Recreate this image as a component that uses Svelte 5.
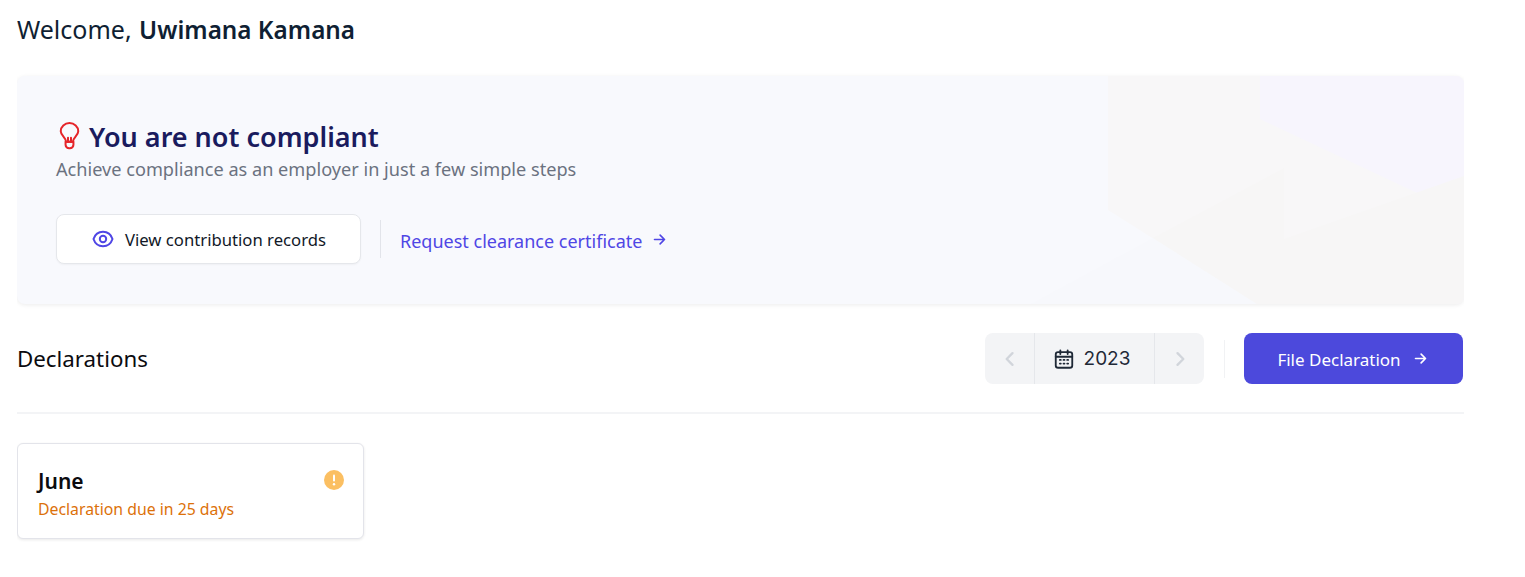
<script>
  let months = [{ name: 'June', note: 'Declaration due in 25 days' }];
</script>

<div class="page">
  <h1 class="welcome">Welcome, <strong>Uwimana Kamana</strong></h1>

  <section class="banner">
    <svg class="decor" viewBox="0 0 1447 228" preserveAspectRatio="none" aria-hidden="true">
      <polygon points="1091,0 1447,0 1447,228 1240,228 1091,134" fill="#f8f7f8" />
      <polygon points="1243,0 1447,0 1447,139 1243,43" fill="#f7f5fd" />
      <polygon points="1014,228 1136,162 1240,228" fill="#f7f8fc" />
      <polygon points="1136,162 1267,92 1267,163 1447,100 1447,228 1240,228" fill="#f7f6f6" />
    </svg>
    <div class="banner-body">
      <div class="title-row">
        <svg class="bulb" viewBox="0 0 24 32" fill="none" stroke="#e5252a" stroke-width="2.300" stroke-linecap="round" stroke-linejoin="round">
          <path d="M8 22.500C8 18 2 15.500 2 10.500a10 9.300 0 0 1 20 0c0 5-6 7.500-6 12z" />
          <path d="M10.300 18v4.500M13.700 18v4.500" />
          <path d="M7.500 22.500h9v3.500a4 4 0 0 1-4 4h-1a4 4 0 0 1-4-4z" />
        </svg>
        <h2>You are not compliant</h2>
      </div>
      <p class="sub">Achieve compliance as an employer in just a few simple steps</p>
      <div class="actions">
        <button class="view">
          <svg width="24" height="24" viewBox="0 0 24 24" fill="none" stroke="#4f46e5" stroke-width="2" stroke-linecap="round" stroke-linejoin="round">
            <circle cx="12" cy="12" r="3.200" />
            <path d="M2.500 12C4 7.500 7.700 4.800 12 4.800s8 2.700 9.500 7.200c-1.500 4.500-5.200 7.200-9.500 7.200S4 16.500 2.500 12z" />
          </svg>
          View contribution records
        </button>
        <span class="vr"></span>
        <a class="link" href="#clearance">
          Request clearance certificate
          <svg class="arrow" width="15" height="15" viewBox="0 0 24 24" fill="none" stroke="currentColor" stroke-width="2.600" stroke-linecap="round" stroke-linejoin="round"><path d="M4 12h16M13 5l7 7-7 7" /></svg>
        </a>
      </div>
    </div>
  </section>

  <div class="decl-head">
    <h3>Declarations</h3>
    <div class="tools">
      <div class="year">
        <button class="step" aria-label="Previous year">
          <svg width="20" height="20" viewBox="0 0 24 24" fill="none" stroke="#d1d5db" stroke-width="2.800" stroke-linecap="round" stroke-linejoin="round"><path d="M15 5l-7 7 7 7" /></svg>
        </button>
        <div class="current">
          <svg width="22" height="22" viewBox="0 0 24 24" fill="none" stroke="#1f2937" stroke-width="2" stroke-linecap="round" stroke-linejoin="round">
            <rect x="3" y="4.500" width="18" height="17" rx="2.500" />
            <path d="M3 9.500h18M8 2.500v4M16 2.500v4" />
            <path d="M7.500 13h1M11.500 13h1M15.500 13h1M7.500 17h1M11.500 17h1M15.500 17h1" />
          </svg>
          2023
        </div>
        <button class="step" aria-label="Next year">
          <svg width="20" height="20" viewBox="0 0 24 24" fill="none" stroke="#d1d5db" stroke-width="2.800" stroke-linecap="round" stroke-linejoin="round"><path d="M9 5l7 7-7 7" /></svg>
        </button>
      </div>
      <span class="vr light"></span>
      <button class="file">
        File Declaration
        <svg class="arrow" width="15" height="15" viewBox="0 0 24 24" fill="none" stroke="currentColor" stroke-width="2.600" stroke-linecap="round" stroke-linejoin="round"><path d="M4 12h16M13 5l7 7-7 7" /></svg>
      </button>
    </div>
  </div>

  <div class="cards">
    {#each months as month}
      <div class="card">
        <div>
          <div class="month">{month.name}</div>
          <div class="note">{month.note}</div>
        </div>
        <svg class="warn" width="20" height="20" viewBox="0 0 20 20">
          <circle cx="10" cy="10" r="10" fill="#fbbf62" />
          <rect x="9" y="4.500" width="2" height="7" rx="1" fill="#fff" />
          <circle cx="10" cy="14.200" r="1.200" fill="#fff" />
        </svg>
      </div>
    {/each}
  </div>
</div>

<style>
  :global(body) {
    margin: 0;
    background: #fff;
    font-family: "Noto Sans", "Open Sans", sans-serif;
  }

  .page {
    width: 1447px;
    margin-left: 17px;
    height: 577px;
    overflow: hidden;
    color: #111827;
  }

  .welcome {
    margin: 0;
    padding-top: 11px;
    height: 76px;
    box-sizing: border-box;
    font-size: 25px;
    line-height: 36px;
    font-weight: 400;
    color: #0f1f33;
  }

  .welcome strong {
    font-size: 24.300px;
    font-weight: 600;
    margin-left: 1px;
  }

  .banner {
    position: relative;
    height: 228px;
    background: #f8f9fd;
    border-radius: 8px;
    box-shadow: 0 1px 4px rgba(0, 0, 0, 0.08);
    overflow: hidden;
  }

  .decor {
    position: absolute;
    inset: 0;
    width: 100%;
    height: 100%;
  }

  .banner-body {
    position: relative;
    padding: 44px 39px 0;
  }

  .title-row {
    display: flex;
    align-items: center;
    gap: 9px;
    height: 34px;
    margin-left: 3px;
  }

  .bulb {
    width: 21px;
    height: 28px;
    margin-top: -3px;
  }

  .title-row h2 {
    margin: 0;
    font-size: 27px;
    line-height: 34px;
    font-weight: 600;
    color: #1a1b5e;
  }

  .sub {
    margin: 1px 0 0;
    font-size: 18.150px;
    line-height: 28px;
    color: #6b7280;
  }

  .actions {
    display: flex;
    align-items: center;
    margin-top: 31px;
  }

  .view {
    display: flex;
    align-items: center;
    justify-content: center;
    gap: 10px;
    width: 305px;
    height: 50px;
    box-sizing: border-box;
    background: #fff;
    border: 1px solid #e5e7eb;
    border-radius: 8px;
    box-shadow: 0 1px 2px rgba(0, 0, 0, 0.04);
    font: inherit;
    font-size: 16.700px;
    color: #111827;
  }

  .vr {
    width: 1px;
    height: 38px;
    margin: 0 19px;
    background: #e2e4ea;
  }

  .vr.light {
    margin: 0 19px 0 20px;
    background: #f1f2f4;
  }

  .link {
    display: flex;
    align-items: center;
    gap: 10px;
    padding-top: 3px;
    font-size: 18px;
    color: #4f46e5;
    text-decoration: none;
  }

  .arrow {
    margin-top: -3px;
  }

  .decl-head {
    display: flex;
    justify-content: space-between;
    align-items: center;
    margin-top: 29px;
    height: 51px;
    padding-bottom: 28px;
    border-bottom: 2px solid #f3f4f6;
  }

  h3 {
    margin: 0;
    font-size: 22.300px;
    font-weight: 400;
    color: #0b0b0f;
  }

  .tools {
    display: flex;
    align-items: center;
    margin-right: 1px;
  }

  .year {
    display: flex;
    height: 51px;
    width: 219px;
    background: #f3f4f6;
    border-radius: 8px;
  }

  .step {
    width: 49px;
    flex: none;
    border: 0;
    padding: 0;
    background: none;
    display: flex;
    align-items: center;
    justify-content: center;
  }

  .current {
    flex: 1;
    display: flex;
    align-items: center;
    justify-content: center;
    gap: 9px;
    padding-right: 6px;
    border-left: 1px solid #e5e7eb;
    border-right: 1px solid #e5e7eb;
    font-family: Inter, sans-serif;
    font-size: 19px;
    color: #1f2937;
  }

  .file {
    display: flex;
    align-items: center;
    justify-content: center;
    gap: 12px;
    width: 219px;
    height: 51px;
    padding: 2px 2px 0 0;
    background: #4c49dc;
    border: 0;
    border-radius: 8px;
    font: inherit;
    font-size: 17px;
    color: #fff;
  }

  .cards {
    margin-top: 29px;
  }

  .card {
    display: flex;
    justify-content: space-between;
    align-items: flex-start;
    width: 347px;
    height: 96px;
    box-sizing: border-box;
    padding: 22px 19px 0 20px;
    background: #fff;
    border: 1px solid #e3e4ea;
    border-radius: 6px;
    box-shadow: 0 1px 3px rgba(0, 0, 0, 0.09);
  }

  .month {
    font-size: 21px;
    line-height: 30px;
    font-weight: 600;
    color: #0b0b0f;
  }

  .note {
    font-size: 15.800px;
    line-height: 26px;
    color: #dc7109;
  }

  .warn {
    margin-top: 4px;
  }
</style>
